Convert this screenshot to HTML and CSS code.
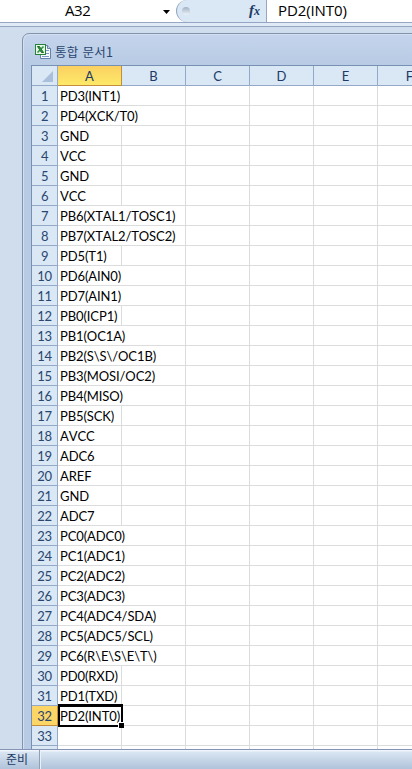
FILE: index.html
```html
<!DOCTYPE html>
<html lang="ko">
<head>
  <meta charset="UTF-8">
  <meta name="viewport" content="width=device-width, initial-scale=1.0">
  <title>통합 문서1</title>
  <link rel="stylesheet" href="styles.css">
</head>
<body>
<!--FORMULA BAR-->
  <div class="formula-bar">
    <div class="name-box">
      <span class="cell-name">A32</span>
      <svg class="arrow" width="7" height="4" viewBox="0 0 7 4"><path d="M0 0h7L3.5 4z"/></svg>
    </div>
    <div class="fx-area">
      <span class="knob"></span>
      <span class="fx">f<small>x</small></span>
    </div>
    <div class="formula">PD2(INT0)</div>
  </div>
  <div class="bar-edge"></div>

<!--WORKBOOK WINDOW-->
  <div class="workspace">
    <div class="book">
      <div class="book-title">
        <svg class="book-icon" width="17" height="16" viewBox="0 0 17 16">
          <path d="M5.5 1.5h7l3 3v10h-10z" fill="#f4f8fd" stroke="#6682ab"/>
          <path d="M12.5 1.5v3h3" fill="#c5d6ea" stroke="#6682ab"/>
          <path d="M11 6.5h3M11 9.5h3M7 12.5h7" stroke="#7c9bc7"/>
          <rect x=".5" y=".5" width="10" height="10" fill="#e9f5e5" stroke="#26823a"/>
          <path d="M2.5 2.5h2l4 6h-2z" fill="#2c9140" stroke="#187129"/>
          <path d="M8.5 2.5l-6 6" stroke="#2c9140" stroke-width="1.6"/>
        </svg>
        <span>통합 문서1</span>
      </div>
      <div class="sheet">
        <div class="row head">
          <div class="corner"><svg width="11" height="11" viewBox="0 0 11 11"><path d="M11 0v11H0z" fill="#a9bfdb"/></svg></div>
          <div class="cell active">A</div>
          <div class="cell">B</div>
          <div class="cell">C</div>
          <div class="cell">D</div>
          <div class="cell">E</div>
          <div class="cell">F</div>
        </div>
        <div class="js-rows"></div>
      </div>
    </div>
  </div>

<!--STATUS BAR-->
  <div class="status">
    <span class="ready">준비</span>
  </div>

  <script>
    const pins = ['PD3(INT1)', 'PD4(XCK/T0)', 'GND', 'VCC', 'GND', 'VCC',
      'PB6(XTAL1/TOSC1)', 'PB7(XTAL2/TOSC2)', 'PD5(T1)', 'PD6(AIN0)', 'PD7(AIN1)',
      'PB0(ICP1)', 'PB1(OC1A)', 'PB2(S\\S\\/OC1B)', 'PB3(MOSI/OC2)', 'PB4(MISO)',
      'PB5(SCK)', 'AVCC', 'ADC6', 'AREF', 'GND', 'ADC7', 'PC0(ADC0)', 'PC1(ADC1)',
      'PC2(ADC2)', 'PC3(ADC3)', 'PC4(ADC4/SDA)', 'PC5(ADC5/SCL)', 'PC6(R\\E\\S\\E\\T\\)',
      'PD0(RXD)', 'PD1(TXD)', 'PD2(INT0)', ''];
    // rows whose text runs over into column B
    const spill = [1, 2, 7, 8, 10, 11, 13, 14, 15, 16, 23, 24, 25, 26, 27, 28, 29];
    let html = '';

    pins.forEach(function (pin, i) {
      const num = i + 1;
      let rowClass = 'row';
      if (spill.includes(num)) {
        rowClass += ' spill';
      }
      if (num === 32) {
        rowClass += ' selected';
      }
      html += `<div class="${rowClass}">
        <div class="num">${num}</div>
        <div class="cell first"><span class="pin">${pin}</span></div>
        <div class="cell"></div><div class="cell"></div><div class="cell"></div>
        <div class="cell"></div><div class="cell"></div>
      </div>`;
    });
    // the next row only shows its top edge
    html += `<div class="row"><div class="num"></div>
      <div class="cell"></div><div class="cell"></div><div class="cell"></div>
      <div class="cell"></div><div class="cell"></div><div class="cell"></div></div>`;
    document.querySelector('.js-rows').innerHTML = html;
  </script>
</body>
</html>
```
FILE: styles.css
```css
body {
  margin: 0;
  width: 412px;
  height: 769px;
  overflow: hidden;
  display: flex;
  flex-direction: column;
  background-color: #d0dded;
  font-family: Lato, "Noto Sans CJK KR", sans-serif;
}
.formula-bar {
  display: flex;
  height: 22px;
  flex: none;
  background-color: white;
  border-bottom: 1px solid #94a6c1;
  font-family: "Open Sans", "Noto Sans CJK KR", sans-serif;
  font-size: 15px;
  line-height: 22px;
}
.name-box {
  display: flex;
  align-items: center;
  width: 176px;
}
.cell-name {
  width: 98px;
  padding: 0 0 2px 65px;
  line-height: 20px;
  letter-spacing: -0.4px;
}
.arrow {
  margin-top: 2px;
}
.fx-area {
  display: flex;
  justify-content: space-between;
  width: 91px;
  box-sizing: border-box;
  background-color: #dae7f5;
  border-left: 1px solid #94a6c1;
  border-right: 1px solid #94a6c1;
  border-radius: 11px 0 0 11px;
}
.knob {
  width: 8px;
  height: 8px;
  margin: 7px 0 0 5px;
  border-radius: 4px;
  background: linear-gradient(#a3b1c6, #edf3fa);
}
.fx {
  padding-right: 6px;
  color: #203a65;
  font-family: "Liberation Serif", serif;
  font-size: 15px;
  font-style: italic;
  font-weight: bold;
  line-height: 20px;
}
.fx small {
  font-size: 12px;
}
.formula {
  padding-left: 11px;
  line-height: 20px;
  letter-spacing: -0.1px;
}
.bar-edge {
  height: 3px;
  flex: none;
  background-color: #e0eaf6;
  border-bottom: 1px solid #94a6c1;
}
.workspace {
  flex: 1;
  min-height: 0;
  overflow: hidden;
  padding: 6px 0 0 22px;
}
.book {
  width: 400px;
  height: 730px;
  border: 1px solid #8393ab;
  border-radius: 7px 0 0 0;
  background: linear-gradient(#c4d4ec, #b8cbe4 32px);
  box-shadow: inset 1px 1px #d3e0f1;
}
.book-title {
  display: flex;
  align-items: center;
  height: 31px;
  padding: 2px 0 0 12px;
  box-sizing: border-box;
  color: #29466f;
  font-family: "Noto Sans CJK KR", sans-serif;
  font-size: 12.5px;
  letter-spacing: 0.3px;
}
.book-title span {
  margin-left: 3px;
  padding-top: 1px;
}
.book-icon {
  margin-top: 2px;
}
.sheet {
  margin-left: 8px;
  width: 420px;
  border-top: 1px solid #7890b3;
  border-left: 1px solid #7890b3;
  background-color: white;
}
.row {
  display: flex;
  height: 20px;
}
.cell {
  width: 64px;
  flex: none;
  box-sizing: border-box;
  border-right: 1px solid #dadcdd;
  border-bottom: 1px solid #dadcdd;
}
.head .cell {
  background-color: #dae7f5;
  border-color: #94a9c8;
  color: #203a65;
  font-size: 13px;
  line-height: 21px;
  text-align: center;
}
.head .active {
  background: linear-gradient(#fbd061, #fde969);
  border-color: #c38d3b;
}
.corner, .num {
  width: 26px;
  flex: none;
  box-sizing: border-box;
  background-color: #dae7f5;
  border-right: 1px solid #94a9c8;
  border-bottom: 1px solid #94a9c8;
}
.corner svg {
  display: block;
  margin: 5px 0 0 10px;
}
.num {
  color: #29466f;
  font-size: 13px;
  line-height: 21px;
  text-align: center;
  letter-spacing: -0.4px;
}
.first {
  padding-left: 2px;
  font-size: 13px;
  line-height: 21px;
  font-kerning: none;
  letter-spacing: -0.1px;
  white-space: nowrap;
}
.spill .first {
  border-right: none;
}
.pin {
  position: relative;
}
.selected .num {
  background-color: #fcd567;
  border-color: #c38d3b;
}
.selected .first {
  position: relative;
}
.selected .first::before {
  content: "";
  position: absolute;
  left: 0;
  top: -2px;
  width: 61px;
  height: 18px;
  border: 2px solid black;
  border-top-width: 3px;
  border-bottom-width: 2px;
}
.selected .first::after {
  content: "";
  position: absolute;
  left: 60px;
  top: 16px;
  width: 5px;
  height: 5px;
  background-color: black;
  border-top: 1px solid white;
  border-left: 1px solid white;
}
.status {
  display: flex;
  flex: none;
  height: 19px;
  border-top: 1px solid #8594b4;
  background: linear-gradient(#f0f5fb 1px, #d9e5f2 2px, #b0c3da);
  color: #203a65;
  font-family: "Noto Sans CJK KR", sans-serif;
  font-size: 12px;
  line-height: 17px;
}
.ready {
  width: 33px;
  padding-left: 6px;
  border-right: 1px solid #8f9fb6;
  box-shadow: 1px 0 #e9f0f8;
}
```
